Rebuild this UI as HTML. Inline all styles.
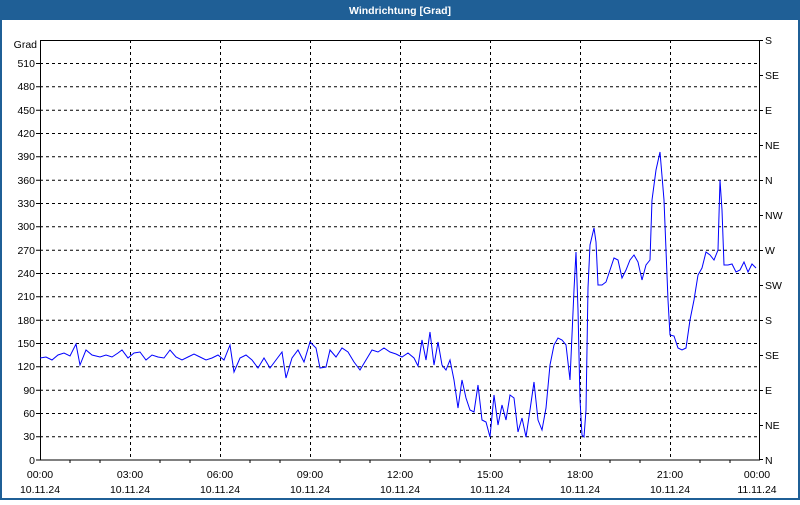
<!DOCTYPE html>
<html><head><style>
body{margin:0;width:800px;height:500px;overflow:hidden;background:#fff;font-family:"Liberation Sans",sans-serif;}
</style></head><body>
<svg width="800" height="500" xmlns="http://www.w3.org/2000/svg" font-family="Liberation Sans, sans-serif" font-size="10.5">
<rect x="0" y="0" width="800" height="500" fill="#fff"/>
<rect x="0" y="0" width="800" height="20" fill="#1f5f96"/>
<rect x="0" y="0" width="2" height="500" fill="#1f5f96"/>
<rect x="798" y="0" width="2" height="500" fill="#1f5f96"/>
<rect x="0" y="498" width="800" height="2" fill="#1f5f96"/>
<text x="400" y="14" fill="#fff" font-weight="bold" text-anchor="middle" font-size="10.5">Windrichtung [Grad]</text>
<g stroke="#000" stroke-dasharray="3,3" stroke-width="1">
<line x1="40" y1="63.5" x2="760" y2="63.5"/><line x1="40" y1="86.8" x2="760" y2="86.8"/><line x1="40" y1="110.2" x2="760" y2="110.2"/><line x1="40" y1="133.5" x2="760" y2="133.5"/><line x1="40" y1="156.8" x2="760" y2="156.8"/><line x1="40" y1="180.2" x2="760" y2="180.2"/><line x1="40" y1="203.5" x2="760" y2="203.5"/><line x1="40" y1="226.8" x2="760" y2="226.8"/><line x1="40" y1="250.2" x2="760" y2="250.2"/><line x1="40" y1="273.5" x2="760" y2="273.5"/><line x1="40" y1="296.8" x2="760" y2="296.8"/><line x1="40" y1="320.2" x2="760" y2="320.2"/><line x1="40" y1="343.5" x2="760" y2="343.5"/><line x1="40" y1="366.8" x2="760" y2="366.8"/><line x1="40" y1="390.2" x2="760" y2="390.2"/><line x1="40" y1="413.5" x2="760" y2="413.5"/><line x1="40" y1="436.8" x2="760" y2="436.8"/>
<line x1="130.5" y1="40" x2="130.5" y2="460"/><line x1="220.5" y1="40" x2="220.5" y2="460"/><line x1="310.5" y1="40" x2="310.5" y2="460"/><line x1="400.5" y1="40" x2="400.5" y2="460"/><line x1="490.5" y1="40" x2="490.5" y2="460"/><line x1="580.5" y1="40" x2="580.5" y2="460"/><line x1="670.5" y1="40" x2="670.5" y2="460"/>
</g>
<rect x="40.5" y="40.5" width="719" height="419.5" fill="none" stroke="#000"/>
<g stroke="#000">
<path d="M70 460v3M100 460v3M160 460v3M190 460v3M250 460v3M280 460v3M340 460v3M370 460v3M430 460v3M460 460v3M520 460v3M550 460v3M610 460v3M640 460v3M700 460v3M730 460v3"/>
<path d="M36 63.5h4M36 86.8h4M36 110.2h4M36 133.5h4M36 156.8h4M36 180.2h4M36 203.5h4M36 226.8h4M36 250.2h4M36 273.5h4M36 296.8h4M36 320.2h4M36 343.5h4M36 366.8h4M36 390.2h4M36 413.5h4M36 436.8h4M36 460h4"/>
<path d="M760 40.5h3M760 75.5h3M760 110.5h3M760 145.5h3M760 180.5h3M760 215.5h3M760 250.5h3M760 285.5h3M760 320.5h3M760 355.5h3M760 390.5h3M760 425.5h3M760 459.5h3"/>
</g>
<g text-anchor="end">
<text x="37" y="48">Grad</text>
<text x="35" y="67">510</text><text x="35" y="90">480</text><text x="35" y="114">450</text><text x="35" y="137">420</text><text x="35" y="160">390</text><text x="35" y="184">360</text><text x="35" y="207">330</text><text x="35" y="230">300</text><text x="35" y="254">270</text><text x="35" y="277">240</text><text x="35" y="300">210</text><text x="35" y="324">180</text><text x="35" y="347">150</text><text x="35" y="370">120</text><text x="35" y="394">90</text><text x="35" y="417">60</text><text x="35" y="440">30</text><text x="35" y="464">0</text>
</g>
<g>
<text x="765" y="44">S</text><text x="765" y="79">SE</text><text x="765" y="114">E</text><text x="765" y="149">NE</text><text x="765" y="184">N</text><text x="765" y="219">NW</text><text x="765" y="254">W</text><text x="765" y="289">SW</text><text x="765" y="324">S</text><text x="765" y="359">SE</text><text x="765" y="394">E</text><text x="765" y="429">NE</text><text x="765" y="464">N</text>
</g>
<g text-anchor="middle">
<text x="40" y="478">00:00</text><text x="130" y="478">03:00</text><text x="220" y="478">06:00</text><text x="310" y="478">09:00</text><text x="400" y="478">12:00</text><text x="490" y="478">15:00</text><text x="580" y="478">18:00</text><text x="670" y="478">21:00</text><text x="757" y="478">00:00</text>
<text x="40" y="493">10.11.24</text><text x="130" y="493">10.11.24</text><text x="220" y="493">10.11.24</text><text x="310" y="493">10.11.24</text><text x="400" y="493">10.11.24</text><text x="490" y="493">10.11.24</text><text x="580" y="493">10.11.24</text><text x="670" y="493">10.11.24</text><text x="757" y="493">11.11.24</text>
</g>
<polyline fill="none" stroke="#0000ff" stroke-width="1" points="40,358 46,357 52,360 58,355 64,353 70,356 76,344 80,365 86,350 92,355 100,357 106,355 112,357 118,353 122,350 128,358 134,353 140,352 146,360 152,355 158,357 164,358 170,350 176,357 182,360 188,357 194,354 200,357 206,360 212,358 218,355 224,360 230,345 234,372 240,358 246,355 252,360 258,368 264,358 270,368 276,360 282,352 286,378 292,358 298,350 304,362 310,342 316,348 320,368 326,367 330,350 336,357 342,348 348,352 354,362 360,370 366,360 372,350 378,352 384,348 390,352 396,354 402,357 408,353 414,358 418,366 422,340 426,360 430,332 434,365 438,342 442,365 446,370 450,360 454,380 458,408 462,380 466,398 470,410 474,412 478,385 482,420 486,422 490,437 494,395 498,425 502,405 506,420 510,395 514,398 518,432 522,418 526,437 530,410 534,382 538,420 542,430 546,408 550,365 554,345 558,338 562,340 566,345 570,380 574,290 576,252 578,310 580,400 582,435 584,437 586,410 588,288 590,245 594,228 596,242 598,285 602,285 606,282 610,270 614,258 618,260 622,278 626,270 630,260 634,255 638,262 642,280 646,265 650,260 652,200 656,170 660,152 664,200 668,300 670,335 674,336 678,348 682,350 686,348 690,320 694,300 698,275 702,268 706,252 710,255 714,260 718,250 720,180 722,210 724,265 728,265 732,264 736,272 740,270 744,262 748,272 752,264 756,268"/>
</svg>
</body></html>
